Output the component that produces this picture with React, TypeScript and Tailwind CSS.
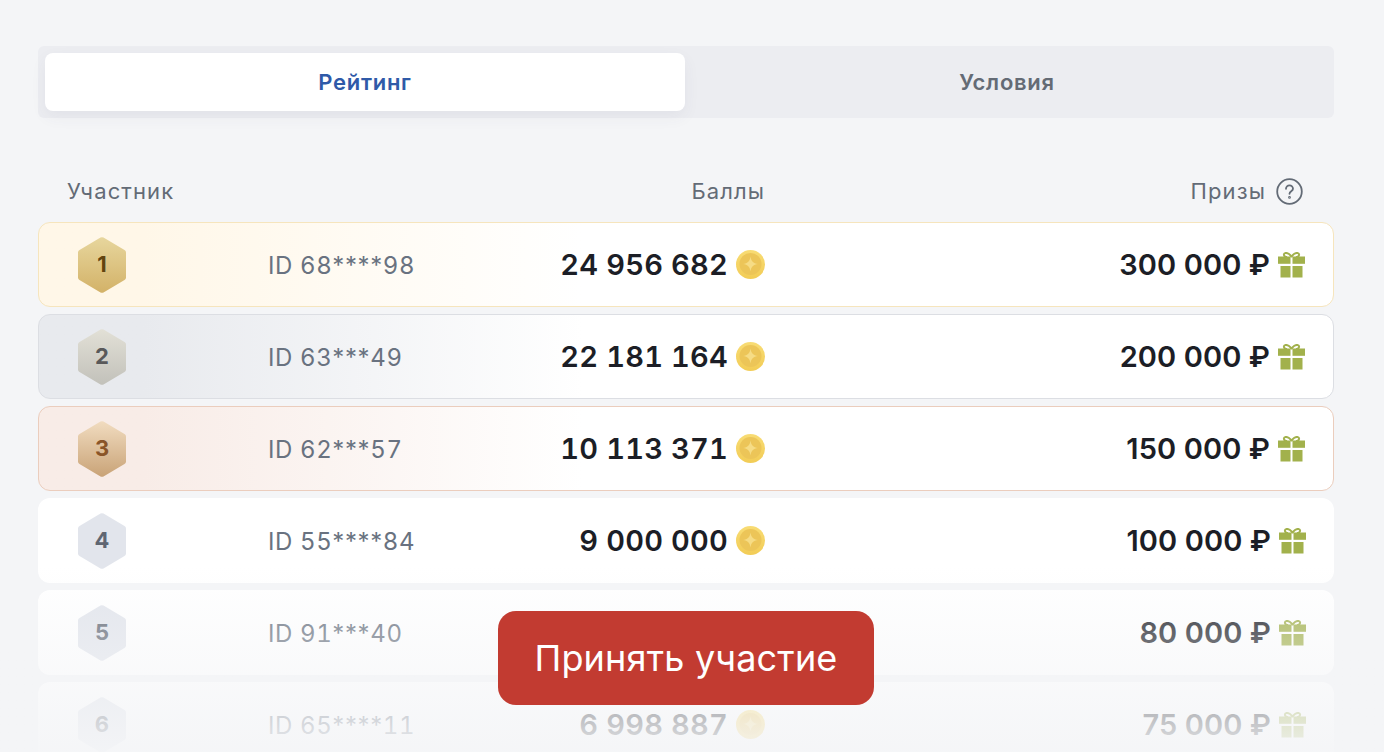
import React from 'react';

const font = { fontFamily: 'Inter, "Noto Sans", sans-serif' };

interface Row {
  place: number;
  id: string;
  score?: string;
  prize: string;
}

// score of place 5 is covered by the button in the picture
const rows: Row[] = [
  { place: 1, id: 'ID 68****98', score: '24 956 682', prize: '300 000 ₽' },
  { place: 2, id: 'ID 63***49', score: '22 181 164', prize: '200 000 ₽' },
  { place: 3, id: 'ID 62***57', score: '10 113 371', prize: '150 000 ₽' },
  { place: 4, id: 'ID 55****84', score: '9 000 000', prize: '100 000 ₽' },
  { place: 5, id: 'ID 91***40', prize: '80 000 ₽' },
  { place: 6, id: 'ID 65****11', score: '6 998 887', prize: '75 000 ₽' },
];

const hexColors: Record<number, [string, string]> = {
  1: ['#e7d69d', '#d3b268'],
  2: ['#e2e0d6', '#c2c1ba'],
  3: ['#f1dcc0', '#c9a377'],
  4: ['#e2e5ec', '#e2e5ec'],
  5: ['#e2e5ec', '#e2e5ec'],
  6: ['#e2e5ec', '#e2e5ec'],
};

const rowClass: Record<number, string> = {
  1: 'border border-[#f6e5bd] bg-gradient-to-r from-[#fff7e8] from-[8%] to-white to-[42%]',
  2: 'border border-[#dcdee3] bg-gradient-to-r from-[#e8eaee] from-[8%] to-white to-[42%]',
  3: 'border border-[#ebcdbd] bg-gradient-to-r from-[#f8ece7] from-[8%] to-white to-[42%]',
  4: 'bg-white pl-[1px]',
  5: 'bg-white pl-[1px]',
  6: 'bg-white pl-[1px]',
};

const numClass: Record<number, string> = {
  1: 'text-[#62440f]',
  2: 'text-[#59595a]',
  3: 'text-[#8a5528]',
  4: 'text-[#5f6672]',
  5: 'text-[#5f6672]',
  6: 'text-[#5f6672]',
};

const Hex = ({ place }: { place: number }) => {
  const [top, bottom] = hexColors[place];
  return (
    <div className="relative flex h-[56px] w-[48px] items-center justify-center">
      <svg className="absolute inset-0" width="48" height="56" viewBox="0 0 48 56">
        <defs>
          <linearGradient id={`hex${place}`} x1="0" y1="0" x2="0" y2="1">
            <stop offset="0" stopColor={top} />
            <stop offset="1" stopColor={bottom} />
          </linearGradient>
        </defs>
        <path
          d="M22.5 .6a3 3 0 0 1 3 0L46.5 13a3 3 0 0 1 1.5 2.6v24.8a3 3 0 0 1-1.5 2.6L25.5 55.4a3 3 0 0 1-3 0L1.500 43A3 3 0 0 1 0 40.400V15.600A3 3 0 0 1 1.500 13z"
          fill={`url(#hex${place})`}
        />
      </svg>
      <span className={`relative text-[22px] font-bold ${numClass[place]}`}>{place}</span>
    </div>
  );
};

const Coin = () => (
  <svg width="29" height="29" viewBox="0 0 29 29" className="shrink-0">
    <defs>
      <linearGradient id="coinEdge" x1="0" y1="0" x2="0" y2="1">
        <stop offset="0" stopColor="#f8dc74" />
        <stop offset="1" stopColor="#f2cc56" />
      </linearGradient>
    </defs>
    <circle cx="14.500" cy="14.500" r="14.500" fill="url(#coinEdge)" />
    <circle cx="14.500" cy="14" r="11" fill="#ecc558" />
    <path d="M14.500 6.500C15.300 11.500 17 13.200 22 14C17 14.800 15.300 16.500 14.500 21.500C13.700 16.500 12 14.800 7 14C12 13.200 13.700 11.500 14.500 6.500Z" fill="#f6dc85" />
  </svg>
);

const Gift = () => (
  <svg width="27" height="26" viewBox="0 0 27 26" className="shrink-0" fill="#a2b14c">
    <rect x="0" y="4.500" width="12.500" height="7.300" />
    <rect x="14.500" y="4.500" width="12.500" height="7.300" />
    <rect x="2.500" y="14" width="10" height="11.500" />
    <rect x="14.500" y="14" width="10" height="11.500" />
    <path
      d="M13.500 5C12.500 2.800 9.800 .6 7.500 1C5.300 1.400 5.300 3.900 7.500 4.700L9 5M13.500 5C14.500 2.800 17.200 .6 19.500 1C21.700 1.400 21.700 3.900 19.500 4.700L18 5"
      fill="none"
      stroke="#a2b14c"
      strokeWidth="2"
    />
  </svg>
);

const HelpIcon = () => (
  <svg width="27" height="27" viewBox="0 0 27 27" fill="none" stroke="#636b76" strokeWidth="1.800">
    <circle cx="13.500" cy="13.500" r="12.300" />
    <path d="M10 10.800a3.500 3.500 0 0 1 7 0c0 2.400-3.500 2.600-3.500 5" strokeLinecap="round" />
    <circle cx="13.500" cy="19.400" r="0.500" />
  </svg>
);

// digits are tabular in the picture, the stars are not
const MaskedId = ({ id }: { id: string }) => (
  <span className="pt-[2px] text-[24px] tracking-[0.6px] tabular-nums text-[#697280]">
    {id.split(/(\*+)/).map((part, i) =>
      part.startsWith('*') ? (
        <span key={i} className="normal-nums">{part}</span>
      ) : (
        part
      ),
    )}
  </span>
);

const RatingRow = ({ row }: { row: Row }) => (
  <div className={`grid h-[85px] shrink-0 grid-cols-[229px_497px_1fr] items-center rounded-[12px] ${rowClass[row.place]}`}>
    <div className="pl-[39px]">
      <Hex place={row.place} />
    </div>
    <div className="flex items-center justify-between">
      <MaskedId id={row.id} />
      {row.score && (
        <span className="flex items-center gap-[8px]">
          <span className="text-[29px] font-semibold tracking-[0.2px] tabular-nums text-[#1c1e26]">{row.score}</span>
          <Coin />
        </span>
      )}
    </div>
    <div className="flex items-center justify-end gap-[8px] pr-[28px]">
      <span className="text-[29px] font-semibold tracking-[0.1px] text-[#1c1e26]">{row.prize}</span>
      <Gift />
    </div>
  </div>
);

export default function App() {
  return (
    <div style={font} className="relative h-[752px] w-full overflow-hidden bg-[#f4f5f7] px-[38px] pr-[50px] pt-[46px]">
      <div className="flex h-[72px] rounded-[6px] bg-[#ecedf1] p-[7px]">
        <div className="flex w-[640px] items-center justify-center rounded-[8px] bg-white text-[22px] font-semibold tracking-[0.7px] text-[#2f5aa8] shadow-[0_6px_16px_rgba(60,70,100,0.06)]">
          Рейтинг
        </div>
        <div className="flex flex-1 items-center justify-center pl-[2px] text-[22px] font-semibold tracking-[0.7px] text-[#646b75]">
          Условия
        </div>
      </div>

      <div className="mb-[8px] mt-[50px] grid h-[46px] grid-cols-[229px_498px_1fr] items-center text-[22px] tracking-[1.1px] text-[#636b76]">
        <span className="pl-[29px]">Участник</span>
        <span className="text-right">Баллы</span>
        <span className="flex items-center justify-end gap-[10px] pr-[31px]">
          Призы <HelpIcon />
        </span>
      </div>

      <div className="flex flex-col gap-[7px]">
        {rows.map((row) => (
          <RatingRow key={row.place} row={row} />
        ))}
      </div>

      {/* fade over the last rows, runs past the page bottom */}
      <div className="absolute inset-x-0 top-[567px] h-[200px] bg-gradient-to-b from-[#f4f5f7]/0 to-[#f4f5f7]" />

      <button className="absolute left-[498px] top-[611px] h-[94px] w-[376px] rounded-[18px] bg-[#c23b31] text-[36px] tracking-[0.2px] text-white">
        Принять участие
      </button>
    </div>
  );
}
